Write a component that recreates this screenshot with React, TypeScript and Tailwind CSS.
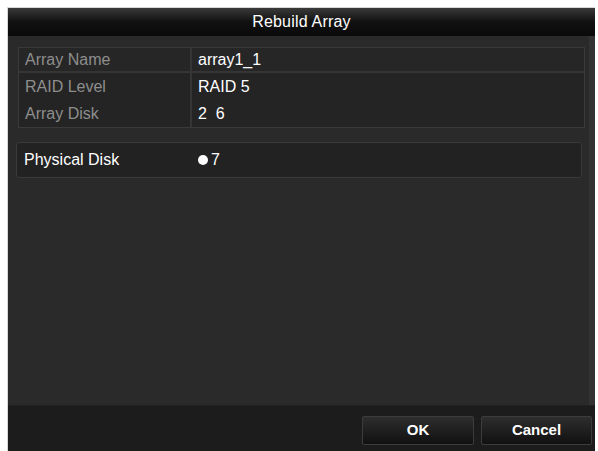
import React from 'react';

const rows = [
  { label: 'Array Name', value: 'array1_1' },
  { label: 'RAID Level', value: 'RAID 5' },
  { label: 'Array Disk', value: '2  6' },
];

const App: React.FC = () => {
  return (
    <div className="w-[598px] h-[451px] bg-white pl-[7px] pt-[7px] pr-[3px] font-['Liberation_Sans',Arial,sans-serif]">
      <div className="flex flex-col h-full bg-[#2a2a2a] border-l border-t border-[#d8d8d8]">
        {/* title bar */}
        <div className="h-[28px] flex items-center justify-center bg-gradient-to-b from-[#3a3a3a] via-[#111111] to-[#0a0a0a] text-[16px] text-white tracking-[0.2px]">
          Rebuild Array
        </div>

        <div className="flex-1 flex flex-col pt-[11px] pl-[10px] pr-[4px] border-r-[6px] border-[#333333]">
          {/* info table */}
          <div className="border border-[#3a3a3a] bg-[#242424] text-[16px]">
            {[rows[0]].map((r) => (
              <div key={r.label} className="flex h-[25px] border-b-2 border-[#353535] bg-[#262626]">
                <div className="w-[173px] pl-[6px] flex items-center text-[#8e8e8e] border-r-2 border-[#353535]">{r.label}</div>
                <div className="pl-[6px] flex items-center text-white">{r.value}</div>
              </div>
            ))}
            <div className="flex">
              <div className="w-[173px] pl-[6px] text-[#8e8e8e] border-r-2 border-[#353535] flex flex-col">
                <div className="h-[27px] flex items-center">{rows[1].label}</div>
                <div className="h-[27px] flex items-center">{rows[2].label}</div>
              </div>
              <div className="pl-[6px] text-white flex flex-col">
                <div className="h-[27px] flex items-center">{rows[1].value}</div>
                <div className="h-[27px] flex items-center whitespace-pre">{rows[2].value}</div>
              </div>
            </div>
          </div>

          {/* physical disk */}
          <div className="mt-[14px] mr-[3px] -ml-[2px] h-[36px] flex items-center rounded-[3px] border border-[#3a3a3a] bg-[#222222] text-[16px] text-white">
            <div className="w-[181px] pl-[7px]">Physical Disk</div>
            <div className="flex items-center gap-[3px]">
              <span className="w-[10px] h-[10px] rounded-full bg-white inline-block" />
              <span>7</span>
            </div>
          </div>
        </div>

        {/* footer */}
        <div className="h-[46px] bg-[#1d1c1c] border-t border-[#202020] flex items-center justify-end gap-[7px] pr-[3px] pt-[4px]">
          <button className="w-[112px] h-[29px] rounded-[2px] border border-[#3c3c3c] bg-gradient-to-b from-[#2e2e2e] to-[#111111] text-white text-[15px] font-bold">
            OK
          </button>
          <button className="w-[111px] h-[29px] rounded-[2px] border border-[#3c3c3c] bg-gradient-to-b from-[#2e2e2e] to-[#111111] text-white text-[15px] font-bold">
            Cancel
          </button>
        </div>
      </div>
    </div>
  );
};

export default App;
